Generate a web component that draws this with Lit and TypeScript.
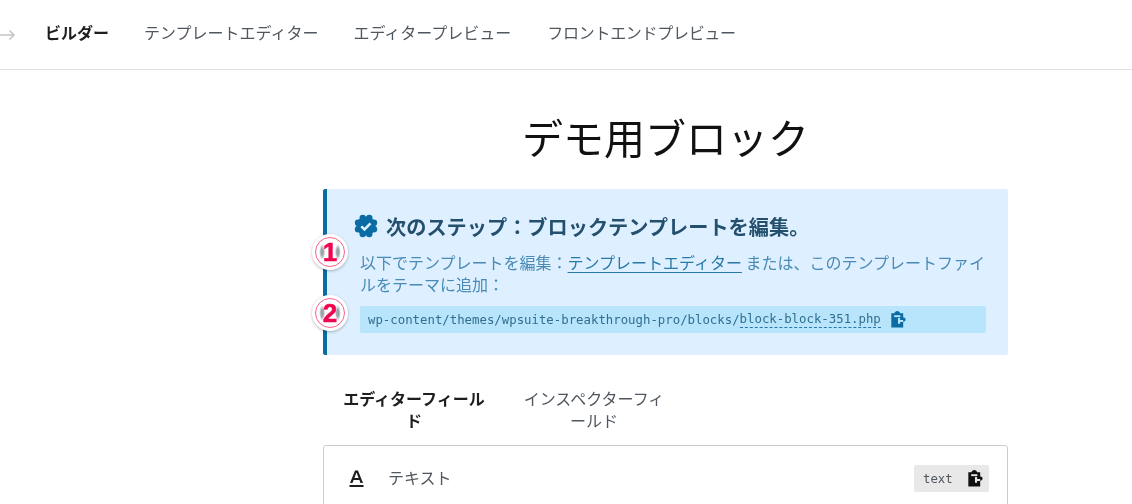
import { LitElement, html, css, svg } from "lit";
import { customElement } from "lit/decorators.js";

const clip = svg`<path fill="currentColor" d="M3.500 3.500h3.300C7.100 2 8.300 1 9.800 1s2.700 1 3 2.500h3.200V8c1.500-.2 2.500.8 2.500 2.100s-1 2.400-2.500 2.200v6.200H3.500z"/><path fill="var(--cut)" d="M6.500 5.500h6.500v2H6.500z"/><path fill="var(--cut)" d="M10.500 8.500h2.200v2h2.800l1 1-1 1h-2.800v2h-2.200z"/>`;

const bumps = [0, 1, 2, 3, 4, 5, 6, 7].map((i) => {
  const t = ((i + 0.5) * Math.PI) / 4;
  return svg`<circle cx=${12 + 8.6 * Math.cos(t)} cy=${12 + 8.6 * Math.sin(t)} r="3.200" fill="currentColor"/>`;
});

@customElement("app-root")
export class AppRoot extends LitElement {
  static styles = css`
    :host {
      display: block;
      width: 1132px;
      height: 504px;
      overflow: hidden;
      background: #fff;
      font-family: "Noto Sans CJK JP", "Noto Sans", sans-serif;
      color: #1e1e1e;
      filter: blur(0.35px);
    }
    .top {
      height: 70px;
      box-sizing: border-box;
      border-bottom: 1px solid #e0e0e0;
      display: flex;
      align-items: center;
      gap: 35px;
      font-size: 16px;
      color: #50575e;
    }
    .arrow { width: 16px; height: 16px; margin-right: -6px; color: #c4c4c4; flex: none; }
    .top b { color: #1e1e1e; font-weight: 700; }
    .top span { position: relative; top: -3px; }
    .top .last { letter-spacing: -0.3px; margin-left: 1px; }
    .main {
      margin-left: 323px;
      width: 685px;
    }
    h1 {
      margin: 0;
      height: 119px;
      box-sizing: border-box;
      padding-top: 14px;
      display: flex;
      align-items: center;
      justify-content: center;
      font-size: 41px;
      font-weight: 400;
      color: #111;
      line-height: 1;
    }
    .notice {
      position: relative;
      height: 166px;
      box-sizing: border-box;
      background: #def0ff;
      border-left: 4px solid #0a6ca3;
      border-radius: 2px;
      padding: 23px 20px 0 33px;
    }
    .head {
      display: flex;
      align-items: center;
      gap: 8px;
      margin-left: -6px;
      height: 28px;
      font-size: 20.2px;
      font-weight: 700;
      color: #24506e;
    }
    .head svg { width: 24px; height: 24px; color: #0a6ca3; flex: none; }
    .body {
      margin: 11px 0 0 0;
      font-size: 16px;
      line-height: 22px;
      color: #4a8ab5;
    }
    .body a { color: #2a78a8; text-decoration: underline; text-underline-offset: 3px; }
    .code {
      margin: 11px 2px 0 0;
      height: 27px;
      background: #b8e4fc;
      border-radius: 2px;
      display: flex;
      align-items: center;
      padding-left: 8px;
      font-family: "DejaVu Sans Mono", monospace;
      font-size: 12.35px;
      color: #2f6f8f;
      white-space: nowrap;
    }
    .code u {
      text-decoration: none;
      border-bottom: 1px dashed #2a78a8;
      line-height: 15px;
    }
    .code svg { width: 19px; height: 19px; margin-left: 7px; color: #0a6ca3; --cut: #b8e4fc; flex: none; }
    .tabs {
      display: flex;
      padding: 32px 0 0 19px;
      font-size: 16px;
      line-height: 22px;
      color: #50575e;
      text-align: center;
      height: 90px;
      box-sizing: border-box;
      gap: 36px;
    }
    .tabs div { width: 144px; word-break: break-all; }
    .tabs .on { color: #1e1e1e; font-weight: 700; }
    .card {
      border: 1px solid #ccc;
      border-radius: 3px;
      height: 120px;
      box-sizing: border-box;
      padding: 19px 18px 0 24px;
      display: flex;
      align-items: flex-start;
      font-size: 16px;
      color: #50575e;
    }
    .card svg.a { width: 17px; height: 20px; color: #1e1e1e; flex: none; margin-top: 4px; }
    .card .lab { margin: -1px 0 0 23px; line-height: 26px; }
    .chip {
      margin-left: auto;
      width: 75px;
      height: 27px;
      box-sizing: border-box;
      background: #e8e8e8;
      border-radius: 2px;
      display: flex;
      align-items: center;
      padding-left: 9px;
      font-family: "DejaVu Sans Mono", monospace;
      font-size: 12.35px;
      color: #50575e;
    }
    .chip svg { width: 19px; height: 19px; margin-left: 12px; color: #111; --cut: #e8e8e8; flex: none; }
    .mark {
      position: absolute;
      left: -15px;
      width: 36px;
      height: 36px;
      border-radius: 50%;
      background: #fff;
      box-shadow: 0 1px 3px rgba(0, 0, 0, 0.28);
      display: flex;
      align-items: center;
      justify-content: center;
    }
    .mark i {
      width: 30px;
      height: 30px;
      box-sizing: border-box;
      border: 1.500px solid #f8608c;
      border-radius: 50%;
      display: flex;
      align-items: center;
      justify-content: center;
      font: 900 26px/1 "Liberation Sans", sans-serif;
      -webkit-text-stroke: 0.5px #f0064f;
      color: #f0064f;
      background:
        radial-gradient(ellipse 3px 8px at 22% 50%, #9aa3a8 0 40%, transparent 100%),
        radial-gradient(ellipse 3px 8px at 78% 50%, #9aa3a8 0 40%, transparent 100%);
    }
    .m1 { top: 45px; }
    .m2 { top: 106px; }
  `;

  render() {
    return html`
      <div class="top">
        <svg class="arrow" viewBox="0 0 16 16" fill="none" stroke="currentColor" stroke-width="1.500"><path d="M-2 8h16M9.500 3.500 14 8l-4.500 4.500"/></svg>
        <b><span>ビルダー</span></b>
        <span>テンプレートエディター</span>
        <span>エディタープレビュー</span>
        <span class="last">フロントエンドプレビュー</span>
      </div>
      <div class="main">
        <h1>デモ用ブロック</h1>
        <div class="notice">
          <div class="head">
            <svg viewBox="0 0 24 24"><circle cx="12" cy="12" r="9.500" fill="currentColor"/>${bumps}<path d="M7.300 12.300l3.200 3.200 6-6.200" fill="none" stroke="#def0ff" stroke-width="2.600"/></svg>
            <span>次のステップ：ブロックテンプレートを編集。</span>
          </div>
          <p class="body">以下でテンプレートを編集：<a>テンプレートエディター</a> または、このテンプレートファイルをテーマに追加：</p>
          <div class="code">wp-content/themes/wpsuite-breakthrough-pro/blocks/<u>block-block-351.php</u><svg viewBox="0 0 20 20">${clip}</svg></div>
          <div class="mark m1"><i>1</i></div>
          <div class="mark m2"><i>2</i></div>
        </div>
        <div class="tabs">
          <div class="on">エディターフィールド</div>
          <div>インスペクターフィールド</div>
        </div>
        <div class="card">
          <svg class="a" viewBox="0 0 17 20"><path fill="currentColor" d="M7 1.500h3l5 12.500h-2.500l-1.100-3H5.600l-1.100 3H2zM6.400 9h4.200L8.500 3.600zM1.500 16h14v2h-14z"/></svg>
          <span class="lab">テキスト</span>
          <div class="chip">text<svg viewBox="0 0 20 20">${clip}</svg></div>
        </div>
      </div>
    `;
  }
}
